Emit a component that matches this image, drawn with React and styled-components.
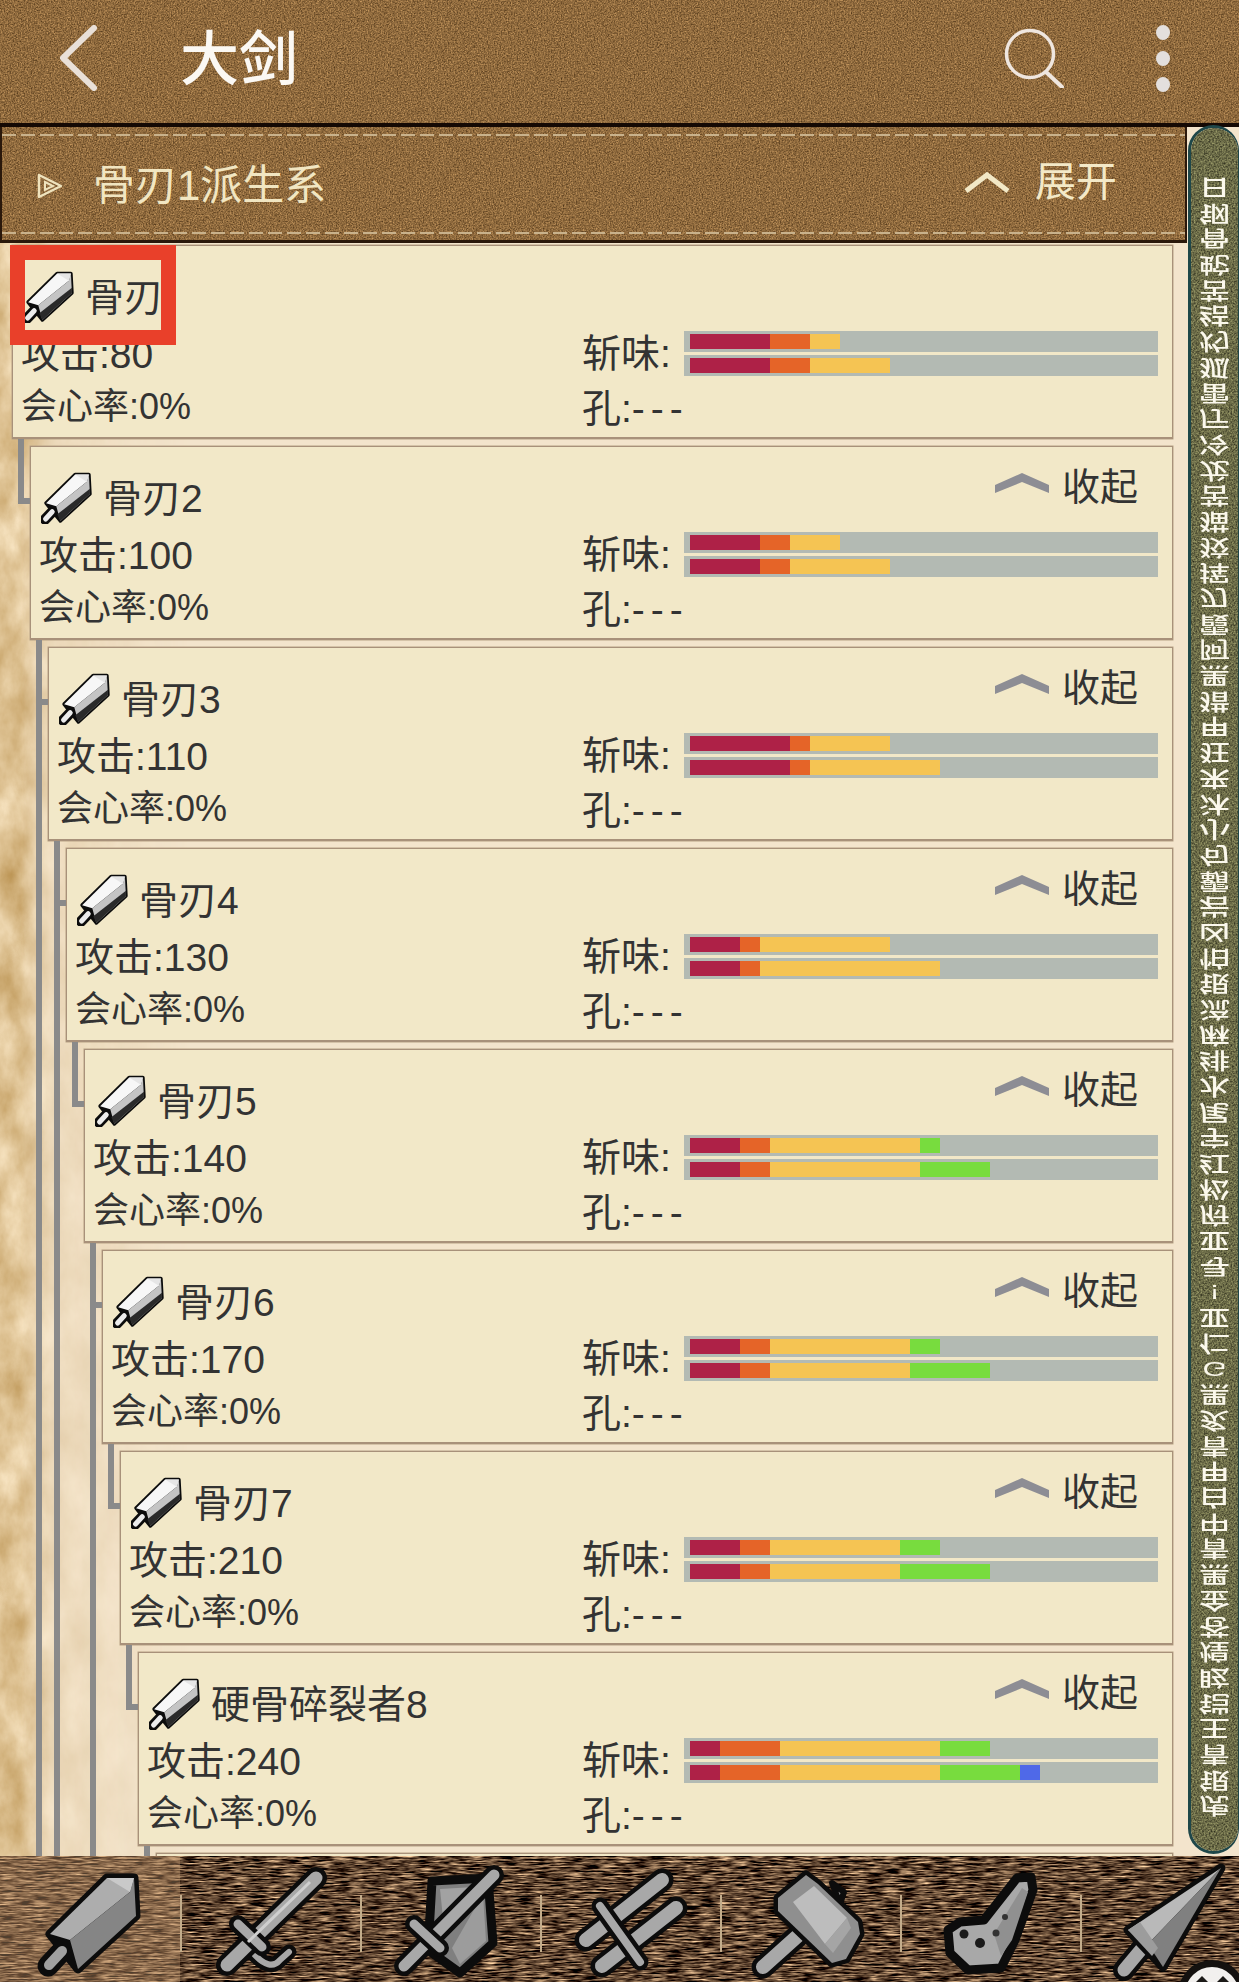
import React from 'react'
import styled, { createGlobalStyle } from 'styled-components'

const FONT = `"Liberation Sans", "Noto Sans CJK SC", sans-serif`

const SHARP = {
  r: '#ae2147',
  o: '#e56428',
  y: '#f5c453',
  g: '#78dc3e',
  b: '#4f69e8',
}

const WEAPONS = [
  { name: '骨刃', atk: 80, top: [['r', 80], ['o', 40], ['y', 30]], bottom: [['r', 80], ['o', 40], ['y', 80]] },
  { name: '骨刃2', atk: 100, toggle: true, trunk: true, top: [['r', 70], ['o', 30], ['y', 50]], bottom: [['r', 70], ['o', 30], ['y', 100]] },
  { name: '骨刃3', atk: 110, toggle: true, trunk: true, top: [['r', 100], ['o', 20], ['y', 80]], bottom: [['r', 100], ['o', 20], ['y', 130]] },
  { name: '骨刃4', atk: 130, toggle: true, top: [['r', 50], ['o', 20], ['y', 130]], bottom: [['r', 50], ['o', 20], ['y', 180]] },
  { name: '骨刃5', atk: 140, toggle: true, trunk: true, top: [['r', 50], ['o', 30], ['y', 150], ['g', 20]], bottom: [['r', 50], ['o', 30], ['y', 150], ['g', 70]] },
  { name: '骨刃6', atk: 170, toggle: true, top: [['r', 50], ['o', 30], ['y', 140], ['g', 30]], bottom: [['r', 50], ['o', 30], ['y', 140], ['g', 80]] },
  { name: '骨刃7', atk: 210, toggle: true, top: [['r', 50], ['o', 30], ['y', 130], ['g', 40]], bottom: [['r', 50], ['o', 30], ['y', 130], ['g', 90]] },
  { name: '硬骨碎裂者8', atk: 240, toggle: true, top: [['r', 30], ['o', 60], ['y', 160], ['g', 50]], bottom: [['r', 30], ['o', 60], ['y', 160], ['g', 80], ['b', 20]] },
  { empty: true },
]

const INDEX = '日钢骨蛇苦结灼狐雷厅冷龙苦猫狡挥刃霞阿黑猎甲狂来沐小句霸岩凶怕银流麻绯水尾宇红松府亚寻!亚仁G黑炙青甲白中青黑金苍煌眩铠王青银虎'.split('')

const BladeIcon = ({ small }) => {
  const face = small ? '#f7f7f7' : '#adadad'
  const shade = small ? '#c4c4c4' : '#858585'
  const tip = small ? '#e6e6e6' : '#c9c9c9'
  const handle = small ? '#ececec' : '#a0a0a0'
  return (
    <IconSvg $small={small} viewBox={small ? '40 12 104 106' : '0 0 180 126'}>
      <path d="M62 95L48 110" stroke="#0c0c0c" strokeWidth="21" strokeLinecap="round" />
      <path d="M107 22L134 22L136 60L78 113L50 78Z" fill="#0c0c0c" stroke="#0c0c0c" strokeWidth={small ? 7 : 9} strokeLinejoin="round" />
      <path d="M62 95L49 109" stroke={handle} strokeWidth="10" strokeLinecap="round" />
      <path d="M107 22L134 22L130 36L70 84L50 78Z" fill={face} />
      <path d="M134 22L136 60L78 113L70 84L130 36Z" fill={shade} />
      <path d="M107 22L134 22L130 36Z" fill={tip} />
      {small && <path d="M136 50L136 60L78 113L72 100Z" fill="#2a2a2a" />}
    </IconSvg>
  )
}

const Stroked = ({ d, w = 11, color = '#a8a8a8', edge = 9 }) => (
  <>
    <path d={d} stroke="#0c0c0c" strokeWidth={w + edge} strokeLinecap="round" strokeLinejoin="round" fill="none" />
    <path d={d} stroke={color} strokeWidth={w} strokeLinecap="round" strokeLinejoin="round" fill="none" />
  </>
)

const LongSwordIcon = () => (
  <IconSvg viewBox="0 0 180 126">
    <Stroked d="M73 97Q90 116 100 104L109 96" w={6} edge={9} />
    <Stroked d="M136 22L47 109" w={13} />
    <Stroked d="M58 68L82 91" w={9} />
    <path d="M130 26L68 86" stroke="#cfcfcf" strokeWidth="3" fill="none" />
  </IconSvg>
)

const ShieldSwordIcon = () => (
  <IconSvg viewBox="0 0 180 126">
    <path d="M72 25L128 22L133 87L100 117L68 94Z" fill="#7f7f7f" stroke="#0c0c0c" strokeWidth="9" strokeLinejoin="round" />
    <path d="M80 33L114 31L84 72Z" fill="#a2a2a2" />
    <path d="M123 38L126 85L100 108L92 92Z" fill="#9c9c9c" />
    <Stroked d="M134 19L44 110" w={11} />
    <Stroked d="M54 68L80 92" w={9} />
  </IconSvg>
)

const DualBladesIcon = () => (
  <IconSvg viewBox="0 0 180 126">
    <Stroked d="M122 24L46 84" w={14} />
    <Stroked d="M136 52L62 110" w={14} />
    <Stroked d="M60 50L100 106" w={8} />
  </IconSvg>
)

const HammerIcon = () => (
  <IconSvg viewBox="0 0 180 126">
    <Stroked d="M82 76L43 111" w={14} />
    <path d="M112 27L124 36L120 48Z" fill="#9a9a9a" stroke="#0c0c0c" strokeWidth="6" strokeLinejoin="round" />
    <path d="M86 19L58 42L58 55L112 107L126 103L140 78L138 66L98 28Z" fill="#0c0c0c" stroke="#0c0c0c" strokeWidth="9" strokeLinejoin="round" />
    <path d="M86 19L58 42L58 55L112 107L126 103L140 78L138 66L98 28Z" fill="#8f8f8f" />
    <path d="M73 46L94 30L127 62L105 88Z" fill="#bdbdbd" />
    <path d="M105 88L127 62L131 72L113 97Z" fill="#a5a5a5" />
  </IconSvg>
)

const HornIcon = () => (
  <IconSvg viewBox="0 0 180 126">
    <path d="M117 22L131 21L133 34L115 84L101 112L68 114L50 97L48 74L60 66L84 64Z" fill="#a8a8a8" stroke="#0c0c0c" strokeWidth="9" strokeLinejoin="round" />
    <path d="M122 32L128 36L112 84L101 100L94 78Z" fill="#909090" />
    <circle cx="64" cy="78" r="4.5" fill="#1a1a1a" />
    <circle cx="80" cy="87" r="5" fill="#1a1a1a" />
    <circle cx="96" cy="77" r="3.5" fill="#333" />
    <circle cx="105" cy="61" r="3" fill="#333" />
  </IconSvg>
)

const LanceIcon = () => (
  <IconSvg viewBox="0 0 180 126">
    <Stroked d="M64 90L44 114" w={13} />
    <path d="M141 12L48 74L83 111Z" fill="#0c0c0c" stroke="#0c0c0c" strokeWidth="9" strokeLinejoin="round" />
    <path d="M141 12L48 74L68 88Z" fill="#b9b9b9" />
    <path d="M141 12L68 88L83 111Z" fill="#808080" />
    <path d="M48 74L60 66L78 92L72 100Z" fill="#9c9c9c" />
  </IconSvg>
)

const NAV_ICONS = [BladeIcon, LongSwordIcon, ShieldSwordIcon, DualBladesIcon, HammerIcon, HornIcon, LanceIcon]

const SharpBar = ({ parts }) => (
  <Bar>
    {parts.map(([c, w], i) => <Seg key={i} $c={SHARP[c]} $w={w} />)}
  </Bar>
)

const WeaponNode = ({ index }) => {
  const w = WEAPONS[index]
  if (!w) return null
  return (
    <Node $child={index > 0} $trunk={w.trunk}>
      <Card>
        {!w.empty && (
          <>
            <CardLeft>
              <NameRow>
                <BladeIcon small />
                <Name>{w.name}</Name>
              </NameRow>
              <Attack>攻击:{w.atk}</Attack>
              <Crit>会心率:0%</Crit>
            </CardLeft>
            <CardRight>
              <ToggleRow>
                {w.toggle && (
                  <>
                    <svg width="54" height="20" viewBox="0 0 54 20">
                      <path d="M0 12L27 0L54 12L54 20L27 9L0 20Z" fill="#8d8d94" />
                    </svg>
                    <ToggleText>收起</ToggleText>
                  </>
                )}
              </ToggleRow>
              <SharpRow>
                <Label>斩味:</Label>
                <Bars>
                  <SharpBar parts={w.top} />
                  <SharpBar parts={w.bottom} />
                </Bars>
              </SharpRow>
              <Slots>孔:<Dashes>---</Dashes></Slots>
            </CardRight>
          </>
        )}
      </Card>
      {index === 0 && <Highlight />}
      <WeaponNode index={index + 1} />
    </Node>
  )
}

const App = () => (
  <Page>
    <GlobalStyle />
    <FilterDefs aria-hidden="true">
      <defs>
        <filter id="leather" x="0" y="0" width="100%" height="100%" colorInterpolationFilters="sRGB">
          <feTurbulence type="fractalNoise" baseFrequency="0.7" numOctaves="4" seed="4" />
          <feColorMatrix values="0.6 0 0 0 0.26  0.5 0 0 0 0.165  0.36 0 0 0 0.06  0 0 0 0 1" />
        </filter>
        <filter id="moss" x="0" y="0" width="100%" height="100%" colorInterpolationFilters="sRGB">
          <feTurbulence type="fractalNoise" baseFrequency="0.6" numOctaves="3" seed="9" />
          <feColorMatrix values="0.6 0 0 0 0.12  0.6 0 0 0 0.12  0.42 0 0 0 0.07  0 0 0 0 1" />
        </filter>
        <filter id="weave" x="0" y="0" width="100%" height="100%" colorInterpolationFilters="sRGB">
          <feTurbulence type="fractalNoise" baseFrequency="0.06 0.6" numOctaves="3" seed="2" />
          <feColorMatrix values="1.7 0 0 0 -0.48  1.5 0 0 0 -0.48  1.2 0 0 0 -0.41  0 0 0 0 1" />
        </filter>
        <filter id="parchment" x="0" y="0" width="100%" height="100%" colorInterpolationFilters="sRGB">
          <feTurbulence type="fractalNoise" baseFrequency="0.03 0.018" numOctaves="5" seed="7" />
          <feColorMatrix values="0.3 0 0 0 0.72  0.4 0 0 0 0.56  0.55 0 0 0 0.3  0 0 0 0 1" />
        </filter>
      </defs>
    </FilterDefs>

    <TopBar>
      <svg width="40" height="66" viewBox="0 0 40 66">
        <path d="M36 3L5 33L36 63" stroke="#e9e0d8" strokeWidth="6" strokeLinecap="round" strokeLinejoin="round" fill="none" />
      </svg>
      <PageTitle>大剑</PageTitle>
      <TopActions>
        <svg width="60" height="60" viewBox="0 0 60 60">
          <circle cx="26" cy="26" r="23.5" stroke="#efe6df" strokeWidth="3.5" fill="none" />
          <path d="M42 44L58 59" stroke="#efe6df" strokeWidth="4" strokeLinecap="round" />
        </svg>
        <MoreDots>
          <Dot />
          <Dot />
          <Dot />
        </MoreDots>
      </TopActions>
    </TopBar>

    <Main>
      <Column>
        <SubHeader>
          <svg width="26" height="26" viewBox="0 0 26 26">
            <path d="M2 2L24 13L2 24Z" stroke="#efe3bd" strokeWidth="2.5" fill="none" strokeLinejoin="round" />
            <path d="M8 9L16 13L8 17Z" stroke="#efe3bd" strokeWidth="2" fill="none" />
          </svg>
          <GroupTitle>骨刃1派生系</GroupTitle>
          <Expand>
            <svg width="46" height="22" viewBox="0 0 46 22">
              <path d="M2 20L23 4L44 20" stroke="#f2e8c6" strokeWidth="5" fill="none" />
            </svg>
            <ExpandText>展开</ExpandText>
          </Expand>
        </SubHeader>
        <Tree>
          <WeaponNode index={0} />
        </Tree>
      </Column>
      <SideIndex>
        {INDEX.map((c, i) => <IndexChar key={i}>{c}</IndexChar>)}
      </SideIndex>
    </Main>

    <NavBar>
      {NAV_ICONS.map((Icon, i) => (
        <Tab key={i} $active={i === 0}>
          <Icon />
        </Tab>
      ))}
      <Mascot viewBox="0 0 70 22">
        <circle cx="43" cy="34" r="34" fill="#14110f" />
        <circle cx="43" cy="34" r="27" fill="#f2f0ee" />
        <path d="M27 22L33 16L39 22Z" fill="#1c1a18" />
        <path d="M48 22L54 16L60 22Z" fill="#1c1a18" />
      </Mascot>
    </NavBar>
  </Page>
)

export default App

//region Style

const GlobalStyle = createGlobalStyle`
  html, body {
    margin: 0;
    padding: 0;
    background: #f3e4cc;
  }
`

const FilterDefs = styled.svg`
  position: absolute;
  width: 0;
  height: 0;
`

const Page = styled.div`
  position: relative;
  width: 1239px;
  height: 1982px;
  display: flex;
  flex-direction: column;
  overflow: hidden;
  font-family: ${FONT};
  color: #333;
`

const TopBar = styled.header`
  position: relative;
  box-sizing: border-box;
  height: 123px;
  flex: none;
  display: flex;
  align-items: center;
  padding: 0 0 7px 58px;
  isolation: isolate;
  &::before {
    content: '';
    position: absolute;
    inset: 0;
    z-index: -1;
    filter: url(#leather);
  }
`

const PageTitle = styled.h1`
  margin: 4px 0 0 82px;
  font-size: 59px;
  line-height: 70px;
  font-weight: 500;
  color: #fbf8f3;
`

const TopActions = styled.div`
  margin-left: auto;
  display: flex;
  align-items: center;
  gap: 92px;
  padding-right: 69px;
`

const MoreDots = styled.div`
  display: flex;
  flex-direction: column;
  gap: 11px;
`

const Dot = styled.span`
  display: block;
  width: 14px;
  height: 15px;
  border-radius: 50%;
  background: #e3dfdd;
`

const Main = styled.main`
  position: relative;
  flex: 1;
  min-height: 0;
  display: flex;
  background: #f3e4cc;
  border-top: 4px solid #140904;
  isolation: isolate;
  &::before {
    content: '';
    position: absolute;
    inset: 0 auto 0 0;
    width: 200px;
    z-index: -1;
    filter: url(#parchment);
    -webkit-mask-image: linear-gradient(90deg, #000 0, #000 20px, rgba(0, 0, 0, 0.3) 50px, transparent 190px);
    mask-image: linear-gradient(90deg, #000 0, #000 20px, rgba(0, 0, 0, 0.3) 50px, transparent 190px);
  }
`

const Column = styled.div`
  width: 1187px;
  flex: none;
  display: flex;
  flex-direction: column;
  min-height: 0;
`

const SubHeader = styled.div`
  position: relative;
  box-sizing: border-box;
  height: 116px;
  flex: none;
  display: flex;
  align-items: center;
  padding: 5px 0 0 35px;
  border: solid #2a180b;
  border-width: 0 2px 3px 2px;
  isolation: isolate;
  &::before {
    content: '';
    position: absolute;
    inset: 0;
    z-index: -1;
    filter: url(#leather);
  }
  &::after {
    content: '';
    position: absolute;
    left: 0;
    right: 0;
    top: 7px;
    bottom: 6px;
    background:
      repeating-linear-gradient(90deg, #c9b28c 0 14px, transparent 14px 19px) top / 100% 2px no-repeat,
      repeating-linear-gradient(90deg, #c9b28c 0 14px, transparent 14px 19px) bottom / 100% 2px no-repeat;
  }
`

const GroupTitle = styled.div`
  margin-left: 30px;
  font-size: 42px;
  line-height: 50px;
  color: #f1e6c2;
`

const Expand = styled.div`
  margin-left: auto;
  display: flex;
  align-items: center;
  gap: 25px;
  padding: 0 68px 9px 0;
`

const ExpandText = styled.div`
  font-size: 41px;
  line-height: 50px;
  color: #f3e9c8;
`

const Tree = styled.div`
  flex: 1;
  min-height: 0;
  overflow: hidden;
  padding: 2px 14px 0 12px;
`

const Node = styled.div`
  position: relative;
  margin: ${p => (p.$child ? '7px 0 0 18px' : '0')};
  ${p => p.$child && `
    &::before {
      content: '';
      position: absolute;
      left: -12px;
      top: -7px;
      width: 12px;
      height: 65px;
      box-sizing: border-box;
      border-left: 6px solid #8a8a8a;
      border-bottom: 6px solid #8a8a8a;
    }
  `}
  ${p => p.$trunk && `
    &::after {
      content: '';
      position: absolute;
      left: 6px;
      top: 194px;
      bottom: 0;
      width: 6px;
      background: #8a8a8a;
    }
  `}
`

const Card = styled.div`
  box-sizing: border-box;
  height: 194px;
  display: flex;
  justify-content: space-between;
  padding: 0 14px 0 8px;
  background: #f2e8c8;
  border: 1px solid #a8917a;
  border-bottom-width: 2px;
  box-shadow: 0 0 0 0.5px #b8a283;
`

const CardLeft = styled.div`
  display: flex;
  flex-direction: column;
`

const NameRow = styled.div`
  display: flex;
  align-items: center;
  gap: 9px;
  margin: 22px 0 0 2px;
`

const IconSvg = styled.svg`
  display: block;
  flex: none;
  width: ${p => (p.$small ? '53px' : '180px')};
  height: ${p => (p.$small ? '55px' : '126px')};
`

const Name = styled.div`
  font-size: 39px;
  line-height: 46px;
  padding-top: 5px;
`

const Attack = styled.div`
  margin-top: 10px;
  font-size: 39px;
  line-height: 44px;
`

const Crit = styled.div`
  margin-top: 8px;
  font-size: 36px;
  line-height: 44px;
`

const CardRight = styled.div`
  width: 576px;
  flex: none;
  display: flex;
  flex-direction: column;
`

const ToggleRow = styled.div`
  box-sizing: border-box;
  height: 84px;
  display: flex;
  justify-content: flex-end;
  gap: 13px;
  padding: 17px 20px 0 0;
  svg {
    margin-top: 9px;
  }
`

const ToggleText = styled.div`
  font-size: 38px;
  line-height: 46px;
`

const SharpRow = styled.div`
  display: flex;
  align-items: center;
`

const Label = styled.div`
  width: 102px;
  flex: none;
  font-size: 39px;
  line-height: 44px;
  padding-top: 2px;
`

const Bars = styled.div`
  width: 474px;
  display: flex;
  flex-direction: column;
  gap: 3px;
`

const Bar = styled.div`
  box-sizing: border-box;
  height: 21px;
  display: flex;
  padding: 3px 6px;
  background: #b3bab3;
`

const Seg = styled.span`
  display: block;
  height: 100%;
  width: ${p => p.$w}px;
  background: ${p => p.$c};
`

const Slots = styled.div`
  margin-top: 10px;
  font-size: 39px;
  line-height: 46px;
`

const Dashes = styled.span`
  letter-spacing: 6px;
`

const Highlight = styled.div`
  position: absolute;
  left: -2px;
  top: 0;
  width: 166px;
  height: 100px;
  box-sizing: border-box;
  border: 15px solid #e9402a;
`

const SideIndex = styled.aside`
  position: relative;
  box-sizing: border-box;
  width: 51px;
  flex: none;
  margin: -2px 0 2px 1px;
  padding-top: 46px;
  display: flex;
  flex-direction: column;
  align-items: center;
  overflow: hidden;
  border: 3px solid #1f4749;
  border-right-width: 1px;
  border-radius: 26px;
  isolation: isolate;
  &::before {
    content: '';
    position: absolute;
    inset: 0;
    z-index: -1;
    filter: url(#moss);
  }
`

const IndexChar = styled.div`
  flex: none;
  height: 25.7px;
  line-height: 25.7px;
  font-size: 31px;
  font-weight: 500;
  color: #fbf8ec;
  transform: scale(1, -0.68);
`

const NavBar = styled.nav`
  position: relative;
  height: 126px;
  flex: none;
  display: flex;
  overflow: hidden;
  isolation: isolate;
  &::before {
    content: '';
    position: absolute;
    inset: 0;
    z-index: -1;
    filter: url(#weave);
  }
`

const Tab = styled.div`
  position: relative;
  width: 180px;
  height: 126px;
  flex: none;
  background: ${p => (p.$active ? 'rgba(190, 150, 110, 0.42)' : 'transparent')};
  &:not(:last-of-type)::after {
    content: '';
    position: absolute;
    right: -2px;
    top: 39px;
    width: 2px;
    height: 57px;
    background: #c3ad8c;
  }
`

const Mascot = styled.svg`
  position: absolute;
  right: 0;
  bottom: 0;
  width: 70px;
  height: 22px;
`
//endregion
